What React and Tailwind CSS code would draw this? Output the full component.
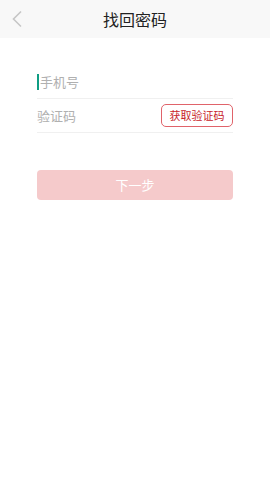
export default function App() {
  return (
    <div
      className="min-h-[480px] w-full bg-white"
      style={{ fontFamily: '"Noto Sans CJK SC", "Noto Sans", sans-serif' }}
    >
      {/* Header */}
      <div className="relative flex h-[38px] items-center justify-center bg-[#f8f8f8]">
        <svg
          className="absolute left-[11px] top-[10px]"
          width="12"
          height="18"
          viewBox="0 0 12 18"
          fill="none"
        >
          <path d="M10 1.5 L2.5 9 L10 16.5" stroke="#c6c6c6" strokeWidth="1.6" />
        </svg>
        <span className="text-[16px] leading-none text-[#222]">找回密码</span>
      </div>

      {/* Form */}
      <div className="mx-[37px] mt-[27px] flex flex-col">
        <div className="flex h-[34px] items-center border-b border-[#f0f0f0]">
          <span className="mr-[1px] h-[16px] w-[2px] bg-[#0f9d83]" />
          <span className="text-[13px] text-[#b0b0b0]">手机号</span>
        </div>
        <div className="flex h-[34px] items-center justify-between border-b border-[#f0f0f0]">
          <span className="text-[13px] text-[#b0b0b0]">验证码</span>
          <button className="flex h-[23px] w-[72px] items-center justify-center rounded-[5px] border border-[#e0636a] text-[11px] text-[#c8242b]">
            获取验证码
          </button>
        </div>
        <button className="mt-[37px] flex h-[30px] w-full items-center justify-center rounded-[4px] bg-[#f5cacb] text-[13px] text-white">
          下一步
        </button>
      </div>
    </div>
  );
}
